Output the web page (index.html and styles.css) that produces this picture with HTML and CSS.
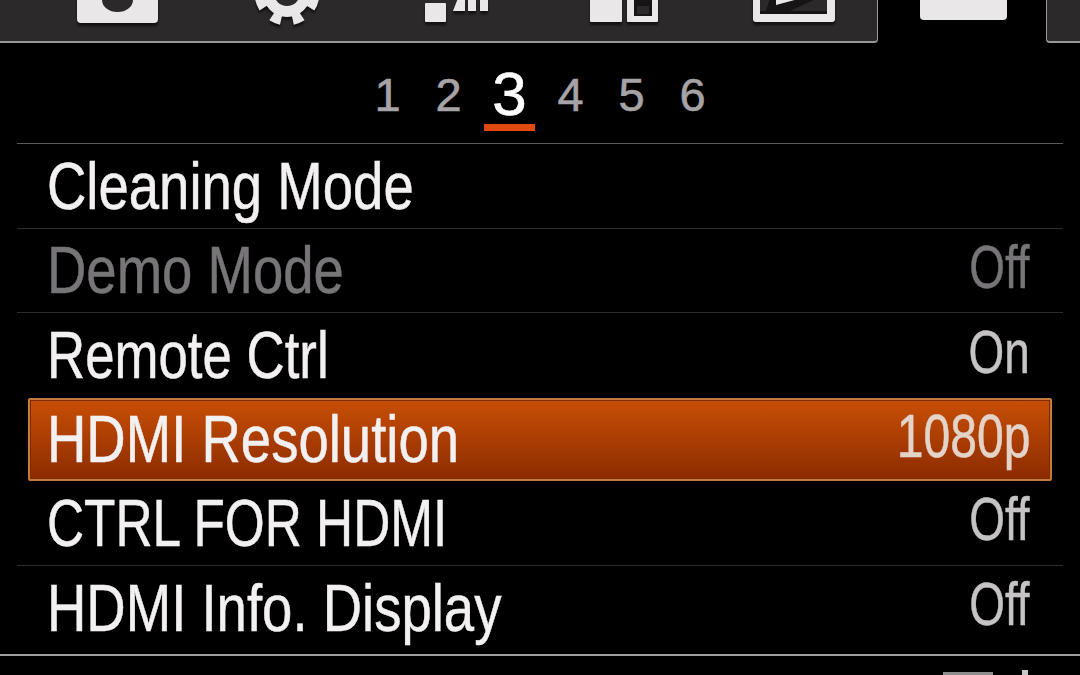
FILE: index.html
```html
<!DOCTYPE html>
<html lang="en">
<head>
<meta charset="utf-8">
<title>HDMI Menu</title>
<link rel="stylesheet" href="styles.css">
</head>
<body>
<header class="tabs">
  <div class="tab-lead"></div>
  <div class="tab">
    <svg class="icon" viewBox="0 0 169 41"><g class="lift"><rect x="43" y="-12" width="81" height="35" rx="4" class="solid"/></g><ellipse cx="83.500" cy="0" rx="15.500" ry="12" class="hole"/></svg>
  </div>
  <div class="tab">
    <svg class="icon" viewBox="0 0 169 41"><g class="lift"><circle cx="84" cy="-7" r="24" class="solid"/><circle cx="84" cy="-7" r="28" class="teeth" transform="rotate(12.300 84 -7)"/></g><circle cx="84" cy="-7" r="13" class="hole"/></svg>
  </div>
  <div class="tab">
    <svg class="icon" viewBox="0 0 169 41"><g class="lift"><rect x="53" y="3" width="21" height="19" rx="1" class="solid"/><path class="solid" d="M86 -2 H93 V11 H81 Z"/><rect x="96" y="-2" width="8" height="13" class="solid"/><rect x="108" y="-2" width="8" height="13" class="solid"/></g></svg>
  </div>
  <div class="tab">
    <svg class="icon" viewBox="0 0 169 41"><g class="lift"><rect x="49" y="-5" width="32" height="27" rx="1" class="solid"/><rect x="86" y="-5" width="31" height="27" rx="1" class="solid"/></g><rect x="93" y="-5" width="18" height="21" class="shade"/><rect x="96" y="6" width="12" height="8" class="hole"/></svg>
  </div>
  <div class="tab tab-last">
    <svg class="icon" viewBox="0 0 169 41"><g class="lift"><rect x="43" y="-10" width="82" height="32" rx="3" class="solid"/></g><rect x="50" y="-10" width="67" height="24" class="hole"/><path class="shade" d="M50 14 V11 H56 L60 -2 L108 -2 L80 11 H117 V14 Z"/><path class="solid" d="M66 -2 H92 L66 5 Z"/></svg>
  </div>
  <div class="tab-active">
    <svg class="icon" viewBox="0 0 168 41"><rect x="42" y="-10" width="87" height="30" rx="4" class="solid"/></svg>
  </div>
  <div class="tab-next"></div>
</header>

<nav class="pages">
  <span class="page">1</span>
  <span class="page">2</span>
  <span class="page page-current">3</span>
  <span class="page">4</span>
  <span class="page">5</span>
  <span class="page">6</span>
</nav>

<main class="list">
  <div class="row"><span class="label">Cleaning Mode</span></div>
  <div class="row row-disabled"><span class="label">Demo Mode</span><span class="value">Off</span></div>
  <div class="row row-before"><span class="label label-tight">Remote Ctrl</span><span class="value">On</span></div>
  <div class="row row-selected"><span class="label">HDMI Resolution</span><span class="value value-wide">1080p</span></div>
  <div class="row row-after"><span class="label label-caps">CTRL FOR HDMI</span><span class="value">Off</span></div>
  <div class="row row-last"><span class="label">HDMI Info. Display</span><span class="value">Off</span></div>
</main>

<footer class="foot">
  <div class="foot-bar"></div>
  <div class="foot-tick"></div>
</footer>
</body>
</html>
```

FILE: styles.css
```css
html, body {
  margin: 0;
  padding: 0;
  width: 1080px;
  height: 675px;
  overflow: hidden;
  background: #000;
  font-family: "Liberation Sans", Arial, sans-serif;
}

.tabs {
  display: flex;
  height: 43px;
}
.tab-lead, .tab, .tab-next {
  height: 43px;
  box-sizing: border-box;
  background: #2b292a;
  border-bottom: 2px solid #9a999a;
}
.tab-lead { width: 34px; }
.tab {
  width: 169px;
  position: relative;
}
.tab::after {
  content: "";
  position: absolute;
  right: -1px;
  top: 0;
  height: 29px;
  width: 1px;
  background: #4a4849;
}
.tab-last {
  width: 168px;
  border-right: 1px solid #9a999a;
  border-bottom-right-radius: 4px;
}
.tab-last::after { display: none; }
.tab-active {
  width: 168px;
  height: 43px;
}
.tab-next {
  flex: 1;
  border-left: 1px solid #9a999a;
  border-bottom-left-radius: 4px;
}
.icon {
  display: block;
  width: 169px;
  height: 41px;
}
.tab-active .icon { width: 168px; }
.lift { filter: drop-shadow(0 3px 1px #131112); }
.solid { fill: #e9e7e8; }
.hole { fill: #2b292a; }
.shade { fill: #161415; }
.teeth {
  fill: none;
  stroke: #e9e7e8;
  stroke-width: 9;
  stroke-dasharray: 10 11.990;
}

.pages {
  display: grid;
  grid-template-columns: repeat(6, 61px);
  justify-content: center;
  align-items: start;
  height: 100px;
}
.page {
  color: #a5a3a6;
  font-size: 47px;
  line-height: 47px;
  margin-top: 28px;
  text-align: center;
  -webkit-text-stroke: 0.6px #a5a3a6;
}
.page-current {
  color: #fff;
  font-size: 62px;
  line-height: 62px;
  margin-top: 20px;
  position: relative;
  -webkit-text-stroke: 0.6px #fff;
}
.page-current::after {
  content: "";
  position: absolute;
  left: 5px;
  right: 5px;
  top: 61px;
  height: 7px;
  background: #e04a10;
}

.list {
  margin: 0 17px;
  border-top: 1px solid #5a595a;
}
.row {
  height: 84.500px;
  box-sizing: border-box;
  border-bottom: 1px solid #2d2c2d;
  display: flex;
  justify-content: space-between;
  align-items: center;
  padding: 0 33px 0 30px;
  color: #f2f0f1;
  font-size: 66px;
}
.row-before, .row-last { border-bottom: 0; }
.label {
  display: block;
  transform: scaleX(0.826);
  transform-origin: left center;
  -webkit-text-stroke: 0.5px currentColor;
}
.label-tight { transform: scaleX(0.8); }
.label-caps { transform: scaleX(0.778); }
.value {
  display: block;
  color: #c5c3c4;
  font-size: 62px;
  transform: translateY(-4px) scaleX(0.74);
  transform-origin: right center;
  -webkit-text-stroke: 0.5px currentColor;
}
.value-wide { transform: translateY(-4px) scaleX(0.775); color: #e3d3c9; }
.row-disabled .label, .row-disabled .value { color: #777577; }
.row-selected {
  margin: 0 11px;
  padding: 0 20px 0 17px;
  height: 83px;
  border: 2px solid #c27a3e;
  border-radius: 2px;
  box-shadow: inset 0 0 0 1px #7c2a00;
  background: linear-gradient(#c84f06, #8c2b00);
}
.row-after { height: 85px; }

.foot {
  border-top: 2px solid #a09fa0;
  margin-top: 3.500px;
  display: flex;
  align-items: flex-start;
  padding: 16px 52px 0 943px;
}
.foot-bar {
  width: 50px;
  height: 4px;
  background: #8e8d8e;
}
.foot-tick {
  width: 6px;
  height: 6px;
  margin: -2px 0 0 29px;
  background: #c8c6c7;
}
```
